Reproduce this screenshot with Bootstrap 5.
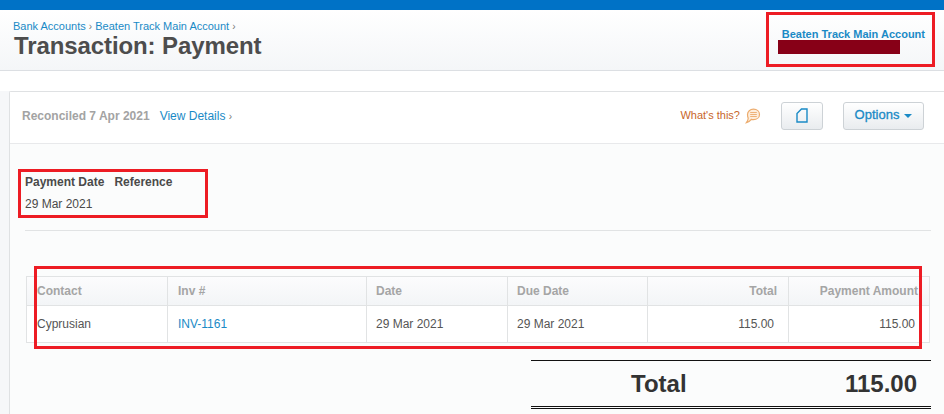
<!DOCTYPE html>
<html lang="en">
<head>
<meta charset="utf-8">
<title>Transaction: Payment</title>
<link href="https://cdn.jsdelivr.net/npm/bootstrap@5.3.0/dist/css/bootstrap.min.css" rel="stylesheet">
<style>
html,body{height:414px;overflow:hidden}
body{font-family:"Liberation Sans",Arial,sans-serif;font-size:12px;color:#4a4a4a;background:#f6f7f9;position:relative;margin:0}
a{color:#1a8ac6;text-decoration:none}
.topstrip{height:10px;background:#0072c6}
.pagehead{height:61px;background:linear-gradient(#fff,#f4f6f8);border-bottom:1px solid #dcdfe3;padding:9px 19px 0 13px}
.crumbs{font-size:11px;line-height:14px;color:#1a8ac6}
.crumbs span{color:#777;font-size:10px}
.pagetitle{font-size:24px;font-weight:700;line-height:26px;margin:-1px 0 0 1px;color:#4d4d4d;letter-spacing:-.1px}
.orgname{font-size:11px;font-weight:700;line-height:14px;margin-top:8px;white-space:nowrap;color:#1a8ac6}
.whitegap{height:20px;background:#fff}
.sheet{margin-left:9px;border:1px solid #dfe1e3;border-right:0;border-bottom:0;border-radius:2px 0 0 0;background:#fbfcfc;height:323px}
.sheethead{height:52px;background:#fff;border-bottom:1px solid #e8e9eb;padding:0 20px 4px 12px}
.recon{font-weight:700;color:#a3a3a3}
.detail{margin-left:10px}
.detail span{color:#777;font-size:10px}
.whats{color:#c8662b;font-size:11px;margin-right:5px}
.whatsicon{margin-right:-1px}
.btnx{height:28px;border:1px solid #cdd2d6;border-radius:3px;background:linear-gradient(#fff,#e9ecef);color:#1a8ac6;display:flex;align-items:center;justify-content:center;padding:0}
.btnpage{width:42px;margin:0 20px 0 21px}
.btnopts{width:81px;font-size:13px;gap:5px;-webkit-text-stroke:.3px #1a8ac6;padding-bottom:1px}
.caretx{width:0;height:0;border-left:4px solid transparent;border-right:4px solid transparent;border-top:4px solid #1a8ac6;margin-top:2px}
.metaarea{padding:31px 13px 0 15px}
.metarow{gap:10px;font-weight:700;line-height:14px;width:160px}
.metaval{line-height:14px;margin-top:8px}
.ruleline{border-top:1px solid #e1e3e4;margin:19px 0 0 0}
.gridbox{display:grid;grid-template-columns:140px 199px 141px 140px 141px 141px;width:904px;margin:45px 0 0 16px;border:1px solid #e1e3e4;background:#fff}
.cellx{height:36px;padding:0 14px 0 10px;display:flex;align-items:center;border-left:1px solid #e1e3e4;color:#555}
.cellx:nth-child(6n+1){border-left:0}
.cellx:nth-child(6n+3),.cellx:nth-child(6n+4){padding-left:9px}
.headx{height:29px;padding-right:11px;background:linear-gradient(#fcfcfd,#f3f5f7);border-bottom:1px solid #e1e3e4;font-weight:700;color:#a5a5a5}
.numx{justify-content:flex-end}
.totalbox{margin:17px 0 0 521px;width:400px;height:49px;border-top:1px solid #111;border-bottom:3px double #111;padding:0 14px 0 100px;font-size:24px;font-weight:700;color:#333}
.annot{position:absolute;border:3px solid #ed1c24;pointer-events:none}
.annot-org{left:766px;top:12px;width:169px;height:55px}
.annot-meta{left:18px;top:169px;width:190px;height:49px}
.annot-table{left:34px;top:266px;width:888px;height:83px}
.redact{position:absolute;left:778px;top:40px;width:122px;height:14px;background:#870017}
</style>
</head>
<body>
<div class="topstrip"></div>
<header class="pagehead d-flex justify-content-between">
  <div>
    <div class="crumbs"><a href="#">Bank Accounts</a> <span>›</span> <a href="#">Beaten Track Main Account</a> <span>›</span></div>
    <h1 class="pagetitle">Transaction: Payment</h1>
  </div>
  <a href="#" class="orgname">Beaten Track Main Account</a>
</header>
<div class="whitegap"></div>
<main class="sheet">
  <div class="sheethead d-flex align-items-center">
    <span class="recon">Reconciled 7 Apr 2021</span>
    <a href="#" class="detail">View Details <span>›</span></a>
    <span class="whats ms-auto">What's this?</span>
    <svg class="whatsicon" width="16" height="16" viewBox="0 0 16 16" fill="#fdeddc" stroke="#ecab6c" stroke-width="1.200"><path d="M8.500 1.200c3.400 0 6 2.200 6 5.200s-2.600 5.200-6 5.200c-.8 0-1.500-.1-2.200-.3-1 1.300-2.500 2.800-4.800 3.300 1-1 1.600-2.500 1.700-4.300C2.900 9.400 2.500 8 2.500 6.400c0-3 2.600-5.200 6-5.200z"/><path d="M5.200 4.500h6.600M5.200 6.500h6.600M5.200 8.500h6.600" stroke-width=".9" fill="none"/></svg>
    <button class="btnx btnpage" type="button" aria-label="Copy"><svg width="12" height="15" viewBox="0 0 12 15" fill="none" stroke="#1a8ac6" stroke-width="1.400"><path d="M5.500 1H11v13H1V5.500z"/></svg></button>
    <button class="btnx btnopts" type="button">Options <i class="caretx"></i></button>
  </div>
  <div class="metaarea">
    <div class="d-flex metarow"><span>Payment Date</span><span>Reference</span></div>
    <div class="metaval">29 Mar 2021</div>
    <div class="ruleline"></div>
  </div>
  <div class="gridbox">
    <div class="cellx headx">Contact</div><div class="cellx headx">Inv #</div><div class="cellx headx">Date</div><div class="cellx headx">Due Date</div><div class="cellx headx numx">Total</div><div class="cellx headx numx">Payment Amount</div>
    <div class="cellx">Cyprusian</div><div class="cellx"><a href="#">INV-1161</a></div><div class="cellx">29 Mar 2021</div><div class="cellx">29 Mar 2021</div><div class="cellx numx">115.00</div><div class="cellx numx">115.00</div>
  </div>
  <div class="totalbox d-flex justify-content-between align-items-center"><span>Total</span><span>115.00</span></div>
</main>
<div class="redact"></div>
<div class="annot annot-org"></div>
<div class="annot annot-meta"></div>
<div class="annot annot-table"></div>
</body>
</html>
